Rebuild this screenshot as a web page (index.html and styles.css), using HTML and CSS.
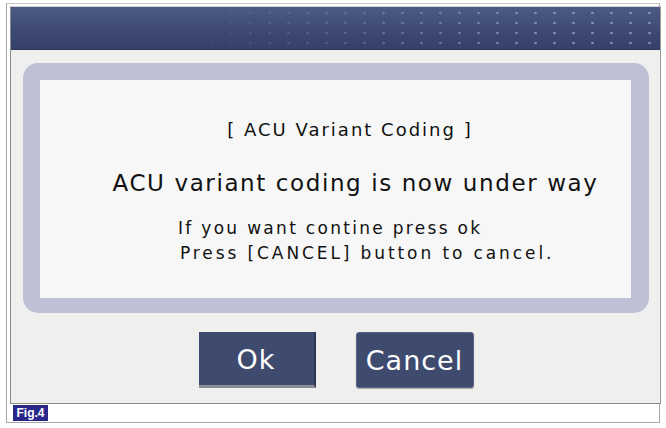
FILE: index.html
```html
<!DOCTYPE html>
<html lang="en">
<head>
    <meta charset="UTF-8">
    <title>ACU Variant Coding</title>
    <link rel="stylesheet" href="styles.css">
</head>
<body>
    <div class="figure">
        <div class="window">
            <div class="header"></div>
            <div class="content">
                <div class="panel">
                    <div class="message">
                        <div class="title">[ ACU Variant Coding ]</div>
                        <div class="status">ACU variant coding is now under way</div>
                        <div class="hint">
                            <div>If you want contine press ok</div>
                            <div class="hint-indent">Press [CANCEL] button to cancel.</div>
                        </div>
                    </div>
                </div>
                <div class="buttons">
                    <button class="btn btn-ok">Ok</button>
                    <button class="btn btn-cancel">Cancel</button>
                </div>
            </div>
        </div>
        <div class="fig-label">Fig.4</div>
    </div>
</body>
</html>
```

FILE: styles.css
```css
body {
    margin: 0;
    padding: 3px 0 0 6px;
    background: #ffffff;
    font-family: "DejaVu Sans", "Liberation Sans", sans-serif;
}
.figure {
    width: 654px;
    height: 420px;
    border: 1px solid #a8a8a8;
    border-top-color: #c4c4c4;
    box-sizing: border-box;
    padding: 2px 0 0 3px;
}
.window {
    width: 651px;
    height: 398px;
    box-sizing: border-box;
    border: 1px solid #8a8a8a;
    border-top-color: #d0d0d0;
    border-right-color: #9a9a9a;
    background: #efefed;
    display: flex;
    flex-direction: column;
}
.header {
    height: 42px;
    position: relative;
    background: linear-gradient(to bottom, #4c5a84, #3a466f 70%, #35416a);
    border-bottom: 1px solid #2e3858;
}
.header::before {
    content: "";
    position: absolute;
    inset: 0;
    background-image: radial-gradient(circle, rgba(150, 165, 205, 0.75) 1px, transparent 1.6px);
    background-size: 19px 10px;
    background-position: 2px 1px;
    -webkit-mask-image: linear-gradient(to right, transparent 25%, #000 85%);
    mask-image: linear-gradient(to right, transparent 25%, #000 85%);
}
.content {
    flex: 1;
    padding: 13px 11px 0 12px;
}
.panel {
    background: #bfc0d5;
    border-radius: 15px;
    padding: 17px 18px 15px 17px;
}
.message {
    background: #f7f7f7;
    height: 218px;
    box-sizing: border-box;
    padding-top: 39px;
    color: #111;
}
.title {
    font-size: 18px;
    line-height: 22px;
    letter-spacing: 2px;
    text-align: center;
    padding-left: 29px;
}
.status {
    margin-top: 27px;
    font-size: 23px;
    line-height: 30px;
    letter-spacing: 1.6px;
    text-align: center;
    padding-left: 40px;
}
.hint {
    margin-top: 18px;
    padding-left: 138px;
    font-size: 17px;
    line-height: 25px;
    letter-spacing: 2.3px;
}
.hint-indent {
    padding-left: 2px;
    letter-spacing: 2.9px;
}
.buttons {
    display: flex;
    justify-content: center;
    gap: 40px;
    margin-top: 19px;
}
.btn {
    width: 117px;
    height: 56px;
    color: #ffffff;
    font-family: "DejaVu Sans", sans-serif;
    font-size: 27px;
    letter-spacing: 1px;
    background: #3f4a6f;
    cursor: pointer;
}
.btn-ok {
    border: none;
    border-right: 2px solid #2c3450;
    border-bottom: 3px solid #8a8c94;
    padding-top: 2px;
}
.btn-cancel {
    width: 118px;
    padding: 0;
    border: 1px solid #5a6488;
    border-radius: 3px;
    box-shadow: 0 1px 1px rgba(0, 0, 0, 0.3);
}
.fig-label {
    margin: 1px 0 0 3px;
    width: 35px;
    height: 16px;
    background: #27288a;
    color: #ffffff;
    font-family: "Liberation Sans", Arial, sans-serif;
    font-weight: bold;
    font-size: 12px;
    line-height: 16px;
    text-align: center;
}
```
